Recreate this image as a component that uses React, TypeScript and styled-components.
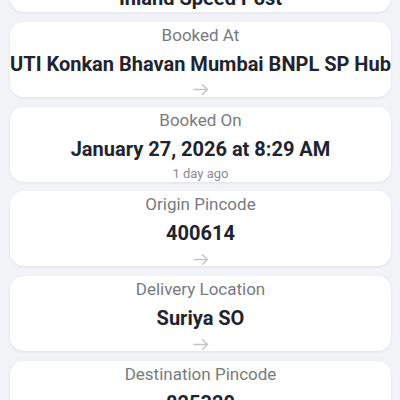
import React from 'react';
import styled, { createGlobalStyle } from 'styled-components';

type Item = {
  label: string;
  value: string;
  sub?: string;
  arrow?: boolean;
};

const ITEMS: Item[] = [
  { label: 'Article Type', value: 'Inland Speed Post' },
  { label: 'Booked At', value: 'UTI Konkan Bhavan Mumbai BNPL SP Hub', arrow: true },
  { label: 'Booked On', value: 'January 27, 2026 at 8:29 AM', sub: '1 day ago' },
  { label: 'Origin Pincode', value: '400614', arrow: true },
  { label: 'Delivery Location', value: 'Suriya SO', arrow: true },
  { label: 'Destination Pincode', value: '825320', arrow: true },
];

const ArrowIcon = () => (
  <svg width="16" height="11" viewBox="0 0 16 11" fill="none">
    <path
      d="M1 5.5H14.5M9.5 0.8L14.5 5.5L9.5 10.2"
      stroke="currentColor"
      strokeWidth="1.4"
      strokeLinecap="round"
      strokeLinejoin="round"
    />
  </svg>
);

function App() {
  return (
    <>
      <GlobalStyle />
      <Page>
        <List>
          {ITEMS.map((item) => (
            <Card key={item.label}>
              <Label>{item.label}</Label>
              <Value>{item.value}</Value>
              {item.sub && <Sub>{item.sub}</Sub>}
              {item.arrow && (
                <Arrow>
                  <ArrowIcon />
                </Arrow>
              )}
            </Card>
          ))}
        </List>
      </Page>
    </>
  );
}

export default App;

const GlobalStyle = createGlobalStyle`
  html, body {
    margin: 0;
    padding: 0;
    background: #f1f3f6;
    font-family: Roboto, "Noto Sans", sans-serif;
  }
`;

const Page = styled.div`
  height: 400px;
  overflow: hidden;
  padding: 0 9px 0 10px;
`;

// list is scrolled down a bit, first card is mostly out of view
const List = styled.div`
  display: flex;
  flex-direction: column;
  gap: 9.75px;
  margin-top: -44px;
`;

const Card = styled.div`
  display: flex;
  flex-direction: column;
  align-items: center;
  background: #ffffff;
  border-radius: 14px;
  box-shadow: 0 1px 3px rgba(30, 40, 60, 0.08);
  padding: 3px 0 1px;
  text-align: center;
`;

const Label = styled.div`
  color: #777b80;
  font-size: 17px;
  line-height: 20px;
`;

const Value = styled.div`
  margin-top: 6px;
  color: #1e2430;
  font-size: 20px;
  font-weight: 700;
  line-height: 26px;
  white-space: nowrap;
`;

const Sub = styled.div`
  margin-top: 4px;
  color: #8a8d92;
  font-size: 13px;
  line-height: 15px;
`;

const Arrow = styled.div`
  display: flex;
  align-items: center;
  justify-content: center;
  height: 16px;
  margin-top: 5px;
  margin-bottom: -2px;
  color: #c2c4c7;
`;
